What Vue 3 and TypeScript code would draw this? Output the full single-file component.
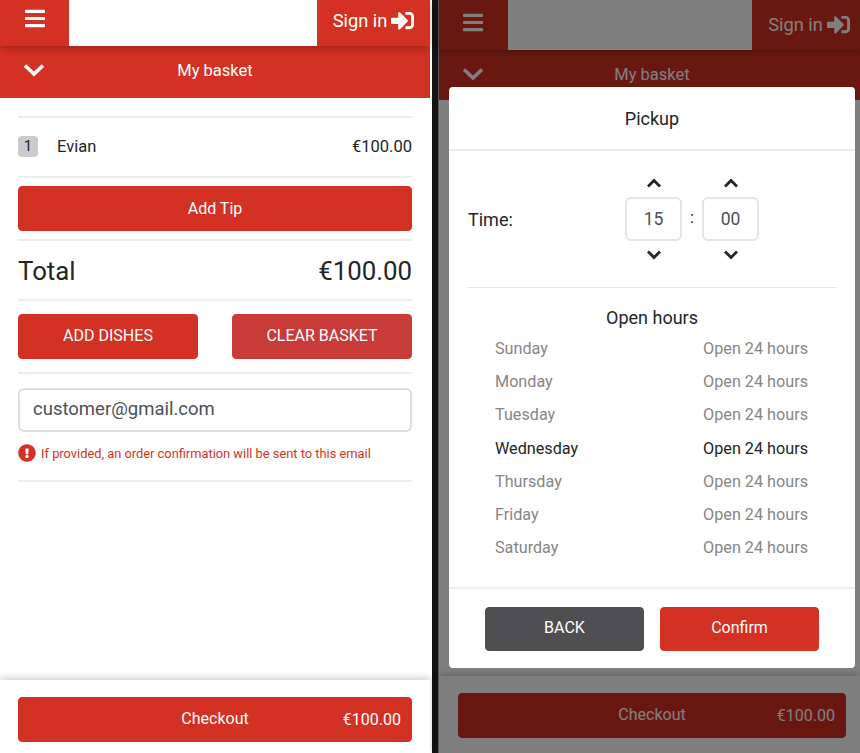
<script setup lang="ts">
const barsPath =
  'M16 132h416c8.837 0 16-7.163 16-16V76c0-8.837-7.163-16-16-16H16C7.163 60 0 67.163 0 76v40c0 8.837 7.163 16 16 16zm0 160h416c8.837 0 16-7.163 16-16v-40c0-8.837-7.163-16-16-16H16c-8.837 0-16 7.163-16 16v40c0 8.837 7.163 16 16 16zm0 160h416c8.837 0 16-7.163 16-16v-40c0-8.837-7.163-16-16-16H16c-8.837 0-16 7.163-16 16v40c0 8.837 7.163 16 16 16z';
const signInPath =
  'M416 448h-84c-6.6 0-12-5.4-12-12v-40c0-6.6 5.4-12 12-12h84c17.7 0 32-14.3 32-32V160c0-17.7-14.3-32-32-32h-84c-6.6 0-12-5.4-12-12V76c0-6.6 5.4-12 12-12h84c53 0 96 43 96 96v192c0 53-43 96-96 96zm-47-201L201 79c-15-15-41-4.5-41 17v96H24c-13.3 0-24 10.7-24 24v96c0 13.3 10.7 24 24 24h136v96c0 21.5 26 32 41 17l168-168c9.3-9.4 9.3-24.6 0-34z';
const alertPath =
  'M504 256c0 136.997-111.043 248-248 248S8 392.997 8 256C8 119.083 119.043 8 256 8s248 111.083 248 248zm-248 50c-25.405 0-46 20.595-46 46s20.595 46 46 46 46-20.595 46-46-20.595-46-46-46zm-43.673-165.346l7.418 136c.347 6.364 5.609 11.346 11.982 11.346h48.546c6.373 0 11.635-4.982 11.982-11.346l7.418-136c.375-6.874-5.098-12.654-11.982-12.654h-63.383c-6.884 0-12.356 5.78-11.981 12.654z';

const days = ['Sunday', 'Monday', 'Tuesday', 'Wednesday', 'Thursday', 'Friday', 'Saturday'];
const today = 'Wednesday';
const timeFields = ['15', '00'];
</script>

<template>
  <div class="screens">
    <!-- basket -->
    <section class="phone">
      <header class="topbar">
        <button type="button" class="menu-btn">
          <svg viewBox="0 0 448 512" width="20" height="23" fill="currentColor"><path :d="barsPath" /></svg>
        </button>
        <div class="logo-slot"></div>
        <button type="button" class="signin-btn">
          Sign in
          <svg viewBox="0 0 512 512" width="23" height="23" fill="currentColor"><path :d="signInPath" /></svg>
        </button>
      </header>
      <div class="basket-bar">
        <svg class="basket-chevron" viewBox="0 0 22 14" width="22" height="14" fill="none" stroke="currentColor" stroke-width="3.6">
          <polyline points="2,2.5 11,11 20,2.5" />
        </svg>
        <span>My basket</span>
      </div>

      <div class="content">
        <div class="row item-row">
          <span class="qty">1</span>
          <span class="item-name">Evian</span>
          <span class="item-price">€100.00</span>
        </div>
        <div class="row tip-row">
          <button type="button" class="btn btn-red btn-full">Add Tip</button>
        </div>
        <div class="row total-row">
          <span>Total</span>
          <span>€100.00</span>
        </div>
        <div class="row actions-row">
          <button type="button" class="btn btn-red">ADD DISHES</button>
          <button type="button" class="btn btn-clear">CLEAR BASKET</button>
        </div>
        <div class="row email-row">
          <input class="email" type="text" value="customer@gmail.com" />
          <p class="hint">
            <svg viewBox="0 0 512 512" width="18" height="18" fill="currentColor"><path :d="alertPath" /></svg>
            If provided, an order confirmation will be sent to this email
          </p>
        </div>
      </div>

      <footer class="checkout-bar">
        <button type="button" class="btn btn-red checkout">
          <span>Checkout</span>
          <span class="checkout-price">€100.00</span>
        </button>
      </footer>
    </section>

    <div class="gap"></div>

    <!-- pickup dialog over the same page -->
    <section class="phone phone-back">
      <header class="topbar topbar-back">
        <button type="button" class="menu-btn">
          <svg viewBox="0 0 448 512" width="20" height="23" fill="currentColor"><path :d="barsPath" /></svg>
        </button>
        <div class="logo-slot"></div>
        <button type="button" class="signin-btn">
          Sign in
          <svg viewBox="0 0 512 512" width="23" height="23" fill="currentColor"><path :d="signInPath" /></svg>
        </button>
      </header>
      <div class="basket-bar basket-bar-back">
        <svg class="basket-chevron" viewBox="0 0 22 14" width="22" height="14" fill="none" stroke="currentColor" stroke-width="3.6">
          <polyline points="2,2.5 11,11 20,2.5" />
        </svg>
        <span>My basket</span>
      </div>
      <div class="content"></div>
      <footer class="checkout-bar checkout-bar-back">
        <button type="button" class="btn btn-red checkout">
          <span>Checkout</span>
          <span class="checkout-price">€100.00</span>
        </button>
      </footer>

      <div class="overlay">
        <div class="dialog" role="dialog" aria-modal="true">
          <h2 class="dialog-title">Pickup</h2>

          <div class="dialog-body">
            <div class="time-row">
              <span class="time-label">Time:</span>
              <div class="time-picker">
                <template v-for="(field, i) in timeFields" :key="i">
                  <span v-if="i > 0" class="time-sep">:</span>
                  <div class="time-field">
                    <svg viewBox="0 0 16 10" width="16" height="10" fill="none" stroke="currentColor" stroke-width="2.8">
                      <polyline points="2,8.5 8,2.5 14,8.5" />
                    </svg>
                    <span class="time-box">{{ field }}</span>
                    <svg viewBox="0 0 16 10" width="16" height="10" fill="none" stroke="currentColor" stroke-width="2.8">
                      <polyline points="2,1.5 8,7.5 14,1.5" />
                    </svg>
                  </div>
                </template>
              </div>
            </div>

            <div class="hours">
              <h3 class="hours-title">Open hours</h3>
              <div v-for="day in days" :key="day" class="hours-row" :class="{ today: day === today }">
                <span>{{ day }}</span>
                <span>Open 24 hours</span>
              </div>
            </div>
          </div>

          <div class="dialog-actions">
            <button type="button" class="btn btn-back">BACK</button>
            <button type="button" class="btn btn-red">Confirm</button>
          </div>
        </div>
      </div>
    </section>
  </div>
</template>

<style scoped>
.screens {
  display: flex;
  width: 860px;
  height: 753px;
  overflow: hidden;
  background: #fff;
  font-family: Roboto, "Liberation Sans", sans-serif;
  color: #212529;
}

.screens * {
  box-sizing: border-box;
}

button {
  font-family: inherit;
  cursor: pointer;
}

.phone {
  position: relative;
  width: 430px;
  height: 753px;
  display: flex;
  flex-direction: column;
  background: #fff;
}

.phone-back {
  width: 421px;
}

.gap {
  width: 9px;
  background: linear-gradient(to right, #fff 0 2px, #141414 2px 8px, #5a5a5a 8px);
}

.topbar {
  height: 46px;
  display: flex;
  flex-shrink: 0;
  position: relative;
  z-index: 1;
  box-shadow: 0 2px 8px rgba(0, 0, 0, 0.28);
}

.topbar-back {
  height: 50px;
}

.menu-btn,
.signin-btn {
  border: 0;
  background: #d33123;
  color: #fff;
  display: flex;
  align-items: center;
  justify-content: center;
}

.menu-btn {
  width: 69px;
  padding: 0 0 10px;
}

.logo-slot {
  flex: 1;
  background: #fff;
}

.signin-btn {
  width: 113px;
  gap: 4px;
  font-size: 18.3px;
  padding: 0 0 5px;
}

.topbar-back .menu-btn {
  padding: 0 1px 6px 0;
}

.topbar-back .signin-btn {
  width: 108px;
  padding: 0 0 2px 6px;
}

.basket-bar {
  height: 52px;
  flex-shrink: 0;
  background: #d33123;
  color: #fff;
  display: flex;
  align-items: center;
  justify-content: center;
  position: relative;
  font-size: 16.5px;
  padding-bottom: 4px;
}

.basket-bar-back {
  height: 50px;
  padding: 0 0 2px 5px;
}

.basket-chevron {
  position: absolute;
  left: 23px;
  top: 17px;
}

.content {
  flex: 1;
  padding: 18px 18px 0;
}

.row {
  border-top: 2px solid #ececec;
}

.item-row {
  height: 60px;
  padding-bottom: 2px;
  display: flex;
  align-items: center;
  font-size: 16.5px;
}

.qty {
  width: 20px;
  height: 21px;
  border-radius: 4px;
  background: #c9cbcf;
  display: flex;
  align-items: center;
  justify-content: center;
  font-size: 15px;
}

.item-name {
  margin-left: 19px;
  flex: 1;
}

.tip-row {
  height: 63px;
  padding-top: 8px;
}

.total-row {
  height: 60px;
  padding-top: 2px;
  display: flex;
  align-items: center;
  justify-content: space-between;
  font-size: 25.8px;
}

.actions-row {
  height: 73px;
  padding-top: 13px;
  display: flex;
  justify-content: space-between;
}

.email-row {
  height: 110px;
  padding-top: 14px;
  border-bottom: 2px solid #ececec;
}

.btn {
  height: 45px;
  width: 180px;
  border: 1px solid #e07a70;
  border-radius: 4px;
  color: #fff;
  font-size: 16px;
  padding: 0;
}

.actions-row .btn,
.checkout {
  padding-bottom: 2px;
}

.btn-red {
  background: #d33123;
  border-color: #d33123;
}

.btn-full {
  width: 100%;
}

.btn-clear {
  background: #c83b39;
  border-color: #c83b39;
}

.btn-back {
  background: #4f4f51;
  border-color: #4f4f51;
}

.email {
  display: block;
  width: 100%;
  height: 44px;
  border: 2px solid #dadee3;
  border-radius: 6px;
  padding: 0 13px 2px;
  font-family: inherit;
  font-size: 18.5px;
  color: #495057;
  outline: none;
}

.hint {
  margin: 12px 0 0;
  display: flex;
  align-items: center;
  gap: 5px;
  font-size: 12.85px;
  color: #d33123;
}

.checkout-bar {
  height: 73px;
  flex-shrink: 0;
  padding: 17px 18px 0;
  background: #fff;
  box-shadow: 0 -2px 8px rgba(0, 0, 0, 0.2);
}

.checkout {
  width: 100%;
  height: 45px;
  position: relative;
}

.checkout-price {
  position: absolute;
  right: 10px;
  top: calc(50% - 1px);
  transform: translateY(-50%);
}

.checkout-bar-back {
  height: 77px;
  padding: 17px 14px 0 19px;
}

.overlay {
  position: absolute;
  inset: 0;
  z-index: 2;
  background: rgba(0, 0, 0, 0.5);
  padding: 87px 5px 0 10px;
}

.dialog {
  height: 581px;
  display: flex;
  flex-direction: column;
  background: #fff;
  border-radius: 4px;
}

.dialog-title {
  height: 64px;
  margin: 0;
  flex-shrink: 0;
  display: flex;
  align-items: center;
  justify-content: center;
  border-bottom: 2px solid #e9ecef;
  font-size: 18px;
  font-weight: 400;
}

.dialog-body {
  flex: 1;
  padding: 0 18px;
}

.time-row {
  height: 137px;
  display: flex;
  align-items: center;
  border-bottom: 1px solid #e3e5e8;
  font-size: 18px;
}

.time-label {
  flex: 0 0 158px;
  padding-left: 1px;
}

.time-picker {
  display: flex;
  align-items: center;
  gap: 8px;
}

.time-field {
  display: flex;
  flex-direction: column;
  align-items: center;
  gap: 9px;
}

.time-box {
  width: 57px;
  height: 44px;
  border: 2px solid #e1e5ea;
  border-radius: 6px;
  display: flex;
  align-items: center;
  justify-content: center;
  font-size: 17.5px;
  color: #495057;
}

.time-sep {
  font-size: 17px;
  padding-bottom: 4px;
  color: #212529;
}

.hours {
  padding-top: 19px;
}

.hours-title {
  margin: 0 0 3px;
  text-align: center;
  font-size: 18px;
  font-weight: 400;
  line-height: 22px;
}

.hours-row {
  height: 33.2px;
  padding: 0 29px 0 28px;
  display: flex;
  align-items: center;
  justify-content: space-between;
  font-size: 16.2px;
  color: #868686;
}

.hours-row.today {
  color: #212529;
}

.dialog-actions {
  height: 81px;
  flex-shrink: 0;
  padding: 18px 36px 0;
  display: flex;
  justify-content: space-between;
  border-top: 2px solid #ececec;
}

.dialog-actions .btn {
  width: 159px;
  height: 44px;
  padding-bottom: 4px;
}
</style>

<style>
html,
body {
  margin: 0;
  background: #fff;
}
</style>
